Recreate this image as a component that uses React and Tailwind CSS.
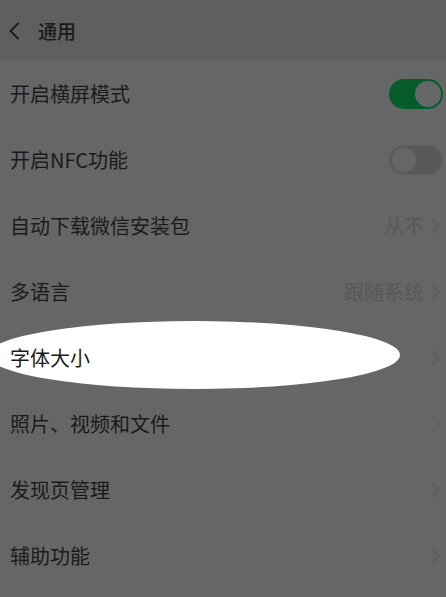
import React from "react";

const font = { fontFamily: '"Noto Sans CJK SC", "Noto Sans", sans-serif' };

function Chevron() {
  return (
    <svg width="9" height="16" viewBox="0 0 9 16" className="ml-[7px] mr-[3px]">
      <path d="M1.5 1.5 L7.5 8 L1.5 14.5" fill="none" stroke="#5c5c5c" strokeWidth="1.2" strokeLinecap="round" strokeLinejoin="round" />
    </svg>
  );
}

function Toggle({ on }) {
  return on ? (
    <div className="w-[54px] h-[30px] rounded-full bg-[#065c2b] flex items-center justify-end px-[2px]">
      <div className="w-[26px] h-[26px] rounded-full bg-[#676767]" />
    </div>
  ) : (
    <div className="w-[54px] h-[30px] rounded-full bg-[#595959] border border-[#5e5e5e] flex items-center justify-start px-[1px]">
      <div className="w-[26px] h-[26px] rounded-full bg-[#666666] border border-[#5e5e5e]" />
    </div>
  );
}

function Row({ label, value, toggle, chevron, highlight }) {
  return (
    <div className="relative h-[66px] flex items-center border-b border-[#696969] pl-[10px] pr-[3px]">
      {highlight && (
        <div className="absolute left-[-12px] top-[-4px] w-[412px] h-[68px] rounded-[50%] bg-white" />
      )}
      <span className="relative text-[20px] text-[#1b1b1b] leading-none flex-1">{label}</span>
      {value && <span className="relative text-[20px] text-[#585858] leading-none">{value}</span>}
      {chevron && <Chevron />}
      {toggle !== undefined && <Toggle on={toggle} />}
    </div>
  );
}

export default function App() {
  return (
    <div className="w-[446px] h-[597px] bg-[#666666] overflow-hidden" style={font}>
      <div className="h-[61px] bg-[#5f5f5f] flex items-center pl-[8px]">
        <svg width="12" height="18" viewBox="0 0 12 18">
          <path d="M10 1.5 L2.5 9 L10 16.5" fill="none" stroke="#1b1b1b" strokeWidth="1.8" strokeLinecap="round" strokeLinejoin="round" />
        </svg>
        <span className="ml-[18px] text-[19px] font-medium text-[#1b1b1b] leading-none">通用</span>
      </div>
      <Row label="开启横屏模式" toggle={true} />
      <Row label="开启NFC功能" toggle={false} />
      <Row label="自动下载微信安装包" value="从不" chevron />
      <Row label="多语言" value="跟随系统" chevron />
      <Row label="字体大小" chevron highlight />
      <Row label="照片、视频和文件" chevron />
      <Row label="发现页管理" chevron />
      <Row label="辅助功能" chevron />
    </div>
  );
}
